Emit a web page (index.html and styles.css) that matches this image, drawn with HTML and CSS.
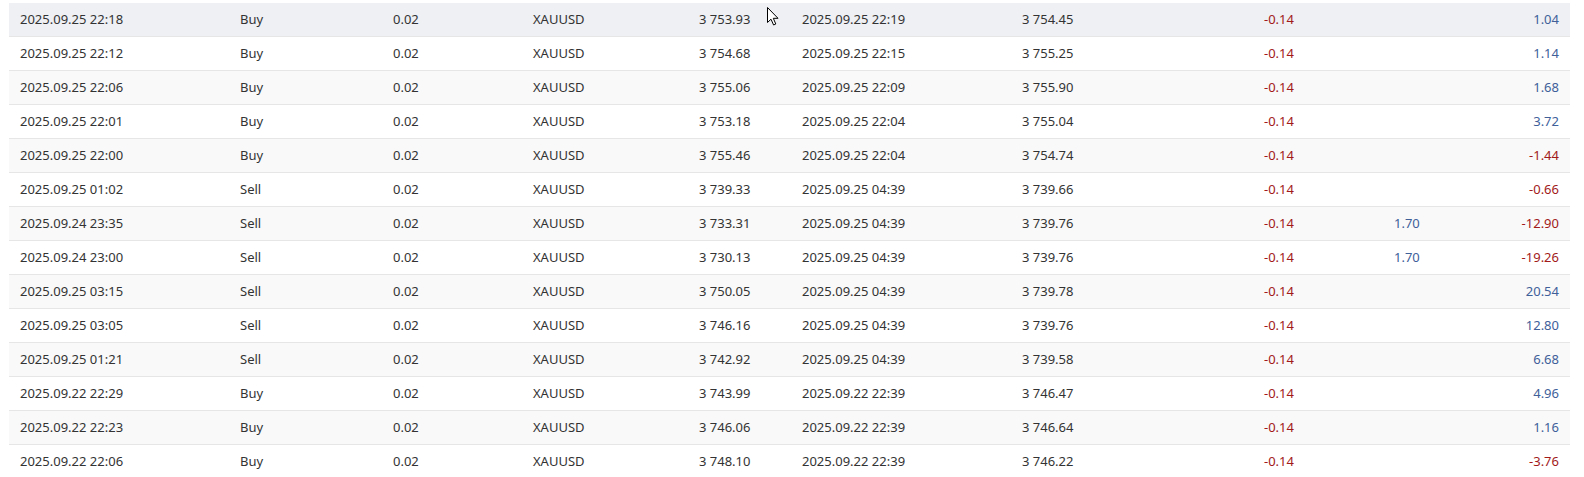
FILE: index.html
```html
<!DOCTYPE html>
<html>
<head>
<meta charset="utf-8">
<link rel="stylesheet" href="styles.css">
</head>
<body>
<div class="page">
  <div class="table">
    <div class="row hover"><span>2025.09.25 22:18</span><span>Buy</span><span>0.02</span><span>XAUUSD</span><span>3 753.93</span><span>2025.09.25 22:19</span><span>3 754.45</span><span class="neg">-0.14</span><span></span><span class="num pos">1.04</span></div>
    <div class="row"><span>2025.09.25 22:12</span><span>Buy</span><span>0.02</span><span>XAUUSD</span><span>3 754.68</span><span>2025.09.25 22:15</span><span>3 755.25</span><span class="neg">-0.14</span><span></span><span class="num pos">1.14</span></div>
    <div class="row"><span>2025.09.25 22:06</span><span>Buy</span><span>0.02</span><span>XAUUSD</span><span>3 755.06</span><span>2025.09.25 22:09</span><span>3 755.90</span><span class="neg">-0.14</span><span></span><span class="num pos">1.68</span></div>
    <div class="row"><span>2025.09.25 22:01</span><span>Buy</span><span>0.02</span><span>XAUUSD</span><span>3 753.18</span><span>2025.09.25 22:04</span><span>3 755.04</span><span class="neg">-0.14</span><span></span><span class="num pos">3.72</span></div>
    <div class="row"><span>2025.09.25 22:00</span><span>Buy</span><span>0.02</span><span>XAUUSD</span><span>3 755.46</span><span>2025.09.25 22:04</span><span>3 754.74</span><span class="neg">-0.14</span><span></span><span class="num neg">-1.44</span></div>
    <div class="row"><span>2025.09.25 01:02</span><span>Sell</span><span>0.02</span><span>XAUUSD</span><span>3 739.33</span><span>2025.09.25 04:39</span><span>3 739.66</span><span class="neg">-0.14</span><span></span><span class="num neg">-0.66</span></div>
    <div class="row"><span>2025.09.24 23:35</span><span>Sell</span><span>0.02</span><span>XAUUSD</span><span>3 733.31</span><span>2025.09.25 04:39</span><span>3 739.76</span><span class="neg">-0.14</span><span class="pos">1.70</span><span class="num neg">-12.90</span></div>
    <div class="row"><span>2025.09.24 23:00</span><span>Sell</span><span>0.02</span><span>XAUUSD</span><span>3 730.13</span><span>2025.09.25 04:39</span><span>3 739.76</span><span class="neg">-0.14</span><span class="pos">1.70</span><span class="num neg">-19.26</span></div>
    <div class="row"><span>2025.09.25 03:15</span><span>Sell</span><span>0.02</span><span>XAUUSD</span><span>3 750.05</span><span>2025.09.25 04:39</span><span>3 739.78</span><span class="neg">-0.14</span><span></span><span class="num pos">20.54</span></div>
    <div class="row"><span>2025.09.25 03:05</span><span>Sell</span><span>0.02</span><span>XAUUSD</span><span>3 746.16</span><span>2025.09.25 04:39</span><span>3 739.76</span><span class="neg">-0.14</span><span></span><span class="num pos">12.80</span></div>
    <div class="row"><span>2025.09.25 01:21</span><span>Sell</span><span>0.02</span><span>XAUUSD</span><span>3 742.92</span><span>2025.09.25 04:39</span><span>3 739.58</span><span class="neg">-0.14</span><span></span><span class="num pos">6.68</span></div>
    <div class="row"><span>2025.09.22 22:29</span><span>Buy</span><span>0.02</span><span>XAUUSD</span><span>3 743.99</span><span>2025.09.22 22:39</span><span>3 746.47</span><span class="neg">-0.14</span><span></span><span class="num pos">4.96</span></div>
    <div class="row"><span>2025.09.22 22:23</span><span>Buy</span><span>0.02</span><span>XAUUSD</span><span>3 746.06</span><span>2025.09.22 22:39</span><span>3 746.64</span><span class="neg">-0.14</span><span></span><span class="num pos">1.16</span></div>
    <div class="row"><span>2025.09.22 22:06</span><span>Buy</span><span>0.02</span><span>XAUUSD</span><span>3 748.10</span><span>2025.09.22 22:39</span><span>3 746.22</span><span class="neg">-0.14</span><span></span><span class="num neg">-3.76</span></div>
  </div>
  <svg class="cursor" width="12" height="19" viewBox="0 0 12 19"><path d="M0.5 0.5 L0.5 15.5 L4 12.2 L6.6 18 L8.8 17 L6.3 11.3 L11 11.3 Z" fill="#fff" stroke="#000" stroke-width="1" stroke-linejoin="round"/></svg>
</div>
</body>
</html>
```
FILE: styles.css
```css
html, body {
  margin: 0;
  padding: 0;
  background: #ffffff;
}
.page {
  position: relative;
  padding: 3px 14px 0 9px;
  font-family: "Noto Sans", "Open Sans", sans-serif;
  font-size: 13px;
  color: #333333;
}
.table {
  display: flex;
  flex-direction: column;
}
.row {
  display: grid;
  grid-template-columns: 220px 153px 140px 166px 103px 220px 242px 130px 100px 1fr;
  height: 33px;
  align-items: center;
  border-bottom: 1px solid #e6e6e6;
  white-space: nowrap;
  line-height: 16px;
}
.row span {
  padding-left: 11px;
  padding-bottom: 1px;
}
.row:nth-child(odd) {
  background: #f9f9f9;
}
.row.hover {
  background: #eef0f3;
}
.row span.num {
  text-align: right;
  padding-left: 0;
  padding-right: 11px;
}
.neg {
  color: #a21a1a;
}
.pos {
  color: #40609a;
}
.cursor {
  position: absolute;
  left: 767px;
  top: 7px;
}
```
